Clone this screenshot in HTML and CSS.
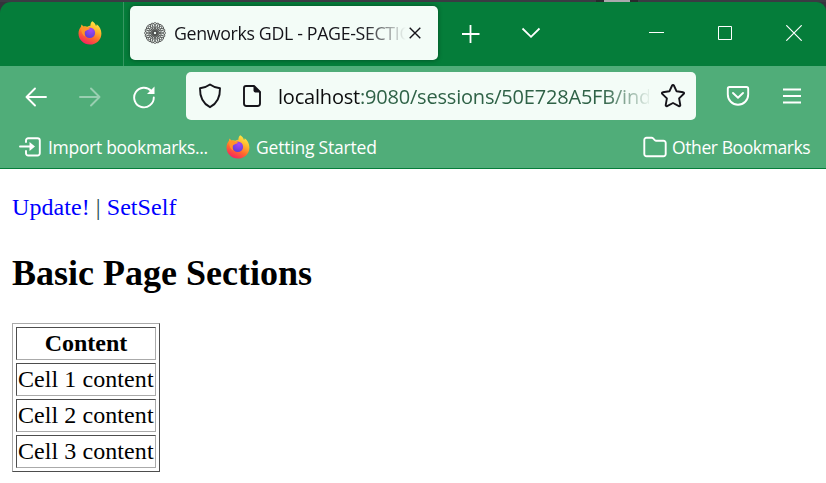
FILE: index.html
```
<!DOCTYPE html>
<html lang="en">
<head>
<meta charset="utf-8">
<title>Genworks GDL - PAGE-SECTIONS</title>
<link rel="stylesheet" href="styles.css">
</head>
<body>
<svg class="defs" width="0" height="0" aria-hidden="true">
  <defs>
    <linearGradient id="flame" x1=".8" y1="0" x2=".3" y2="1">
      <stop offset="0" stop-color="#fff04a"/><stop offset=".35" stop-color="#ffb52b"/><stop offset=".65" stop-color="#ff6a2c"/><stop offset="1" stop-color="#f71d65"/>
    </linearGradient>
    <radialGradient id="globe" cx=".6" cy=".25" r=".8">
      <stop offset="0" stop-color="#a646f5"/><stop offset="1" stop-color="#5b3fd3"/>
    </radialGradient>
    <symbol id="firefox" viewBox="0 0 24 24">
      <path fill="url(#flame)" d="M14.3 0.3c2 1.2 3.1 2.8 3.7 4.7.6-.5.7-1.2.7-1.8 2.9 2.1 4.7 5.6 4.7 9.2C23.400 18.800 18.300 23.500 12 23.500S.5 18.800.5 12.500c0-3 1.200-5.300 2.500-6.800L3.400 3.600 5.600 5.500c1.300-.4 2.700-.3 3.800.3 1.300-.9 2.200-1 3-1-.1-1.900.6-3.500 1.900-4.500z"/>
      <circle cx="11.800" cy="11.800" r="5.300" fill="url(#globe)"/>
      <path fill="#ff9329" d="M3.200 6.600c2.500-1.300 4.800-.9 6.200.3l2.600-.2c-.2 1.200-1 1.800-2.800 2.400-.6.700-1.800.8-2.500 1.900-.2 1.500-.1 3 .6 4.500C4.500 14.500 3 11 3.200 6.600z"/>
    </symbol>
  </defs>
</svg>

<div class="backdrop"><span class="backdrop-handle"></span></div>
<header class="browser">
  <div class="titlebar">
    <div class="pinned"><svg width="24" height="24"><use href="#firefox"/></svg></div>
    <div class="tab">
      <svg class="favicon" width="22" height="22" viewBox="-11 -11 22 22" fill="none" stroke="#4b4d4c" stroke-width=".75">
        <g id="quad">
          <ellipse cx="6" rx="4.400" ry="2.500"/>
          <ellipse cx="6" rx="4.400" ry="2.500" transform="rotate(18)"/>
          <ellipse cx="6" rx="4.400" ry="2.500" transform="rotate(36)"/>
          <ellipse cx="6" rx="4.400" ry="2.500" transform="rotate(54)"/>
          <ellipse cx="6" rx="4.400" ry="2.500" transform="rotate(72)"/>
        </g>
        <use href="#quad" transform="rotate(90)"/><use href="#quad" transform="rotate(180)"/><use href="#quad" transform="rotate(270)"/>
      </svg>
      <span class="tab-title">Genworks GDL - PAGE-SECTIONS</span>
      <svg class="tab-close" width="12" height="12" viewBox="0 0 12 12" fill="none" stroke="#15141a" stroke-width="1.400"><path d="M.7.700 11.300 11.300M11.300.700.700 11.300"/></svg>
    </div>
    <svg class="new-tab" width="18" height="18" viewBox="0 0 18 18" stroke="#fff" stroke-width="1.800"><path d="M8.500 0v18M0 9h17.500"/></svg>
    <svg class="all-tabs" width="20" height="12" viewBox="0 0 20 12" fill="none" stroke="#fff" stroke-width="1.800"><path d="M1.500 1.500 10 9.800l8.500-8.300"/></svg>
    <div class="window-buttons">
      <svg width="16" height="16" stroke="#fff"><path d="M1 7.500h15"/></svg>
      <svg width="16" height="16" fill="none" stroke="#fff"><path d="M1.500 1.500h13v13h-13z"/></svg>
      <svg width="16" height="16" fill="none" stroke="#fff" stroke-width="1.200"><path d="m.3.300 15.400 15.400M15.700.300.300 15.700"/></svg>
    </div>
  </div>

  <nav class="toolbar">
    <svg class="nav-icon back" width="22" height="20" viewBox="0 0 22 20"><path d="M21 10H1.500M10 1.500 1.500 10l8.500 8.500"/></svg>
    <svg class="nav-icon forward" width="22" height="20" viewBox="0 0 22 20"><path d="M1 10h19.500M12 1.500l8.500 8.500-8.500 8.500"/></svg>
    <svg class="nav-icon reload" width="24" height="24" viewBox="0 0 24 24"><path d="M19.300 6A9.800 9.800 0 1 0 21.800 12.500"/><path d="M22.500 1.500V9H15z" fill="#fff" stroke="none"/></svg>
    <div class="urlbar">
      <svg class="shield" width="24" height="26" viewBox="0 0 24 26"><path d="M12 1.500C9 3.700 5.500 4.900 2 5.300c-.2 8 2.300 15 10 18.900 7.700-3.900 10.200-10.900 10-18.900-3.500-.4-7-1.600-10-3.800z"/></svg>
      <svg class="page-icon" width="20" height="24" viewBox="0 0 20 24"><path d="M4 2h8l6 6v11.500a2.500 2.500 0 0 1-2.500 2.500h-11A2.500 2.500 0 0 1 2 19.500V4a2 2 0 0 1 2-2z"/><path class="fold" d="M11.500 1.200 18.800 8.500h-5.300a2 2 0 0 1-2-2z"/></svg>
      <span class="url"><b>localhost</b>:9080/sessions/50E728A5FB/index</span>
      <svg class="star" width="26" height="26" viewBox="0 0 26 26"><path d="M12.100 2.500 9.400 8.300l-6.600.9c-.9.100-1.200 1-.6 1.600l4.700 4.600-1.200 6.700c-.1.800.7 1.400 1.400 1L13 20l5.900 3.100c.7.400 1.500-.2 1.400-1l-1.200-6.700 4.700-4.600c.6-.6.300-1.500-.6-1.600l-6.600-.9-2.700-5.800c-.4-.8-1.400-.8-1.800 0z"/></svg>
    </div>
    <svg class="nav-icon pocket" width="24" height="22" viewBox="0 0 24 22"><path d="M3.500 2h17A1.700 1.700 0 0 1 22.200 3.700V9.500a10.200 10.200 0 0 1-20.400 0V3.700A1.700 1.700 0 0 1 3.500 2z"/><path d="m7 8 5 4.700L17 8"/></svg>
    <svg class="nav-icon menu" width="18" height="16" viewBox="0 0 18 16"><path d="M0 1.500h18M0 8h18M0 14.500h18"/></svg>
  </nav>

  <div class="bookmarks">
    <svg class="nav-icon import" width="22" height="20" viewBox="0 0 22 20"><path d="M7 5V3.500A2.200 2.200 0 0 1 9.200 1.300h9.300a2.300 2.300 0 0 1 2.300 2.300v12.600a2.300 2.300 0 0 1-2.300 2.300H9.200A2.200 2.200 0 0 1 7 16.300V14M1 9.500h11"/><path d="M10.500 5 16 9.500 10.500 14z" fill="#fff" stroke="none"/></svg>
    <span class="label import-label">Import bookmarks...</span>
    <svg class="fox" width="24" height="24"><use href="#firefox"/></svg>
    <span class="label start-label">Getting Started</span>
    <svg class="nav-icon folder" width="24" height="22" viewBox="0 0 24 22"><path d="M3.500 1.800h5.200c.6 0 1 .2 1.400.6l1.700 1.700c.4.400.8.600 1.400.600h7.300a2.200 2.200 0 0 1 2.200 2.200v11.200a2.200 2.200 0 0 1-2.200 2.200h-17a2.200 2.200 0 0 1-2.200-2.200V4a2.200 2.200 0 0 1 2.200-2.200z"/></svg>
    <span class="label other-label">Other Bookmarks</span>
  </div>
</header>

<main class="page">
  <p class="actions"><a>Update!</a> | <a>SetSelf</a></p>
  <h2>Basic Page Sections</h2>
  <table>
    <tr><th>Content</th></tr>
    <tr><td>Cell 1 content</td></tr>
    <tr><td>Cell 2 content</td></tr>
    <tr><td>Cell 3 content</td></tr>
  </table>
</main>
</body>
</html>
```
FILE: styles.css
```
* { box-sizing: border-box; }
body {
  margin: 0;
  height: 483px;
  overflow: hidden;
  background: #fff;
  font-family: "Liberation Serif", "Times New Roman", serif;
}
.defs { position: absolute; }
svg { display: block; flex: none; }

.backdrop { height: 2px; background: #3b3b43; }
.backdrop-handle {
  display: block;
  width: 42px;
  height: 2px;
  margin-left: 596px;
  background: #aaa9ad;
  border: solid #292a2d;
  border-width: 0 8px;
}
.browser {
  height: 167px;
  background: #34343c;
  font-family: "Open Sans", "Noto Sans", sans-serif;
  color: #fff;
}
.titlebar {
  display: flex;
  align-items: center;
  height: 64px;
  background: #057d3a;
  border-radius: 11px 9px 0 0;
}
.pinned {
  display: flex;
  align-items: center;
  width: 124px;
  height: 64px;
  padding: 0 0 2px 78px;
  border-right: 1px solid #379762;
}
.tab {
  display: flex;
  align-items: center;
  width: 308px;
  height: 54px;
  margin: 0 0 2px 6px;
  padding-left: 14px;
  border-radius: 5px;
  background: #f3fcf7;
  box-shadow: 0 0 4px rgba(0, 35, 15, .55);
  color: #15141a;
}
.tab-title {
  width: 233px;
  margin-left: 8px;
  overflow: hidden;
  white-space: nowrap;
  font-size: 17.800px;
  line-height: 28px;
  letter-spacing: -.35px;
  mask-image: linear-gradient(to right, #000 190px, transparent 232px);
}
.tab-close { margin-left: 2px; }
.new-tab { margin-left: 24px; }
.all-tabs { margin: 0 0 2px 41px; }
.window-buttons { display: flex; gap: 53px; margin: 0 0 2px 107px; }

.toolbar {
  display: flex;
  align-items: center;
  height: 60px;
  background: #50ad79;
}
.nav-icon {
  fill: none;
  stroke: #fff;
  stroke-width: 1.900;
  stroke-linecap: round;
  stroke-linejoin: round;
}
.back { margin-left: 25px; margin-top: 2px; }
.forward { margin: 2px 0 0 32px; opacity: .42; }
.reload { margin: 2px 0 0 31px; }
.urlbar {
  display: flex;
  align-items: center;
  width: 510px;
  height: 48px;
  margin-left: 30px;
  padding-left: 12px;
  border-radius: 5px;
  background: #f3fcf7;
}
.urlbar svg { fill: none; stroke: #15141a; stroke-width: 1.900; stroke-linejoin: round; }
.urlbar .fold { fill: #15141a; stroke: none; }
.page-icon { margin-left: 20px; }
.url {
  width: 371px;
  margin: 2px 0 0 16px;
  overflow: hidden;
  white-space: nowrap;
  color: #2f6247;
  font-size: 20px;
  line-height: 30px;
  letter-spacing: -.2px;
  mask-image: linear-gradient(to right, #000 325px, transparent 375px);
}
.url b { font-weight: 400; color: #0c0c0d; }
.star { margin-left: 11px; }
.pocket { margin-left: 30px; }
.menu { margin-left: 33px; }

.bookmarks {
  display: flex;
  align-items: center;
  height: 43px;
  padding: 0 16px 0 19px;
  background: #50ad79;
  border-bottom: 1px solid #057d3a;
}
.label { white-space: nowrap; font-size: 17.500px; line-height: 28px; letter-spacing: -.3px; }
.import-label { width: 160px; margin-left: 7px; }
.fox { margin-left: 18px; }
.start-label { margin-left: 6px; letter-spacing: -.2px; }
.folder { margin-left: auto; }
.other-label { width: 138px; margin-left: 5px; letter-spacing: -.4px; }

.page { padding: 25px 12px 0; color: #000; font-size: 24px; }
.actions { margin: 0; line-height: 27px; color: #1d4d4d; letter-spacing: .06px; }
.actions a { color: #00f; }
h2 { margin: 32px 0 0; font-size: 36px; line-height: 41px; }
table {
  width: 148px;
  margin-top: 29px;
  border: 1px solid;
  border-color: #aaa #4d4d4d #4d4d4d #aaa;
  border-spacing: 3px;
  font-size: 24px;
  line-height: 27px;
}
th, td {
  height: 33px;
  padding: 0 2px;
  border: 1px solid;
  border-color: #4d4d4d #aaa #aaa #4d4d4d;
  white-space: nowrap;
}
td { padding: 0 0 0 1px; letter-spacing: .07px; }
```
